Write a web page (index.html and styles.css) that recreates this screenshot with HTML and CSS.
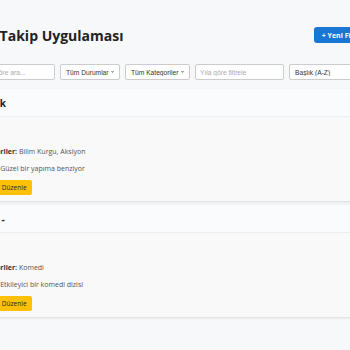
FILE: index.html
```html
<!DOCTYPE html>
<html lang="tr">
<head>
    <meta charset="UTF-8">
    <meta name="viewport" content="width=device-width, initial-scale=1.0">
    <title>Film Takip Uygulaması</title>
    <link rel="stylesheet" href="styles.css">
</head>
<body>
    <div class="container">
        <header class="app-header">
            <h1>Film Takip Uygulaması</h1>
            <button class="add-btn">+ Yeni Film Ekle</button>
        </header>

        <div class="filters">
            <input type="text" class="filter-input" placeholder="Başlığa göre ara...">
            <select class="filter-select">
                <option>Tüm Durumlar</option>
                <option>İzlendi</option>
                <option>İzlenecek</option>
            </select>
            <select class="filter-select">
                <option>Tüm Kategoriler</option>
                <option>Film</option>
                <option>Dizi</option>
            </select>
            <input type="text" class="filter-input" placeholder="Yıla göre filtrele">
            <select class="filter-select sort">
                <option>Başlık (A-Z)</option>
                <option>Başlık (Z-A)</option>
                <option>Yıl</option>
            </select>
        </div>

        <div class="film-list">
            <div class="film-card">
                <div class="film-header">
                    <h3>Kaçak</h3>
                </div>
                <div class="film-body">
                    <p>Film</p>
                    <p><strong>Kategoriler:</strong> Bilim Kurgu, Aksiyon</p>
                    <p>Notlar: Güzel bir yapıma benziyor</p>
                    <div class="card-actions">
                        <button class="btn-delete">Sil</button>
                        <button class="btn-edit">Düzenle</button>
                    </div>
                </div>
            </div>

            <div class="film-card">
                <div class="film-header">
                    <h3>Ofisi -</h3>
                </div>
                <div class="film-body">
                    <p>Dizi</p>
                    <p><strong>Kategoriler:</strong> Komedi</p>
                    <p>Notlar: Etkileyici bir komedi dizisi</p>
                    <div class="card-actions">
                        <button class="btn-delete">Sil</button>
                        <button class="btn-edit">Düzenle</button>
                    </div>
                </div>
            </div>
        </div>
    </div>
</body>
</html>
```

FILE: styles.css
```css
* {
    margin: 0;
    padding: 0;
    box-sizing: border-box;
    font-family: 'Open Sans', sans-serif;
}

body {
    background: #f7f8fa;
    display: flex;
    justify-content: center;
    overflow: hidden;
    min-height: 100vh;
}

.container {
    width: 418px;
    flex-shrink: 0;
    padding-top: 20px;
}

.app-header {
    display: flex;
    justify-content: space-between;
    align-items: center;
    height: 30px;
    margin-bottom: 14px;
}

h1 {
    font-size: 14px;
    color: #222;
}

.add-btn {
    background: #1976d2;
    color: white;
    border: none;
    border-radius: 3px;
    height: 16px;
    padding: 0 8px;
    font-size: 7px;
    font-weight: 700;
    cursor: pointer;
}

.filters {
    display: flex;
    gap: 5px;
    height: 16px;
}

.filter-input,
.filter-select {
    height: 16px;
    border: 1px solid #ccc;
    border-radius: 2px;
    background-color: white;
    color: #333;
    padding: 0 4px;
    font-family: 'Liberation Sans', Arial, sans-serif;
    font-size: 6.67px;
}

.filter-input {
    width: 89px;
}

.filter-input::placeholder {
    color: #aaa;
}

.filter-select {
    appearance: none;
    padding: 0 10px 0 5px;
    background-image:
        linear-gradient(45deg, transparent 50%, #aaa 50%),
        linear-gradient(135deg, #aaa 50%, transparent 50%);
    background-position: calc(100% - 6px) 50%, calc(100% - 4px) 50%;
    background-size: 2px 2px;
    background-repeat: no-repeat;
}

.filter-select.sort {
    flex: 1;
}

.film-list {
    margin-top: 9px;
    display: flex;
    flex-direction: column;
    gap: 4px;
}

.film-card {
    background: #f9f9f9;
    border-radius: 4px;
    box-shadow: 0 1px 3px rgba(0, 0, 0, 0.12);
    overflow: hidden;
}

.film-header {
    height: 28px;
    padding: 0 10px;
    display: flex;
    align-items: center;
    background: #fafbfc;
    border-bottom: 1px solid #eee;
}

.film-header h3 {
    font-size: 10px;
    color: #222;
}

.film-body {
    padding: 12px 10px 6px;
    font-size: 7px;
    color: #555;
}

.film-body p {
    line-height: 12px;
    margin-bottom: 5px;
}

.film-body strong {
    color: #333;
}

.card-actions {
    display: flex;
    gap: 4px;
}

.btn-edit,
.btn-delete {
    height: 15px;
    padding: 0 5px;
    border: none;
    border-radius: 2px;
    font-size: 6.5px;
    cursor: pointer;
}

.btn-edit {
    background: #ffc107;
    color: #212529;
}

.btn-delete {
    background: #dc3545;
    color: white;
}
```
